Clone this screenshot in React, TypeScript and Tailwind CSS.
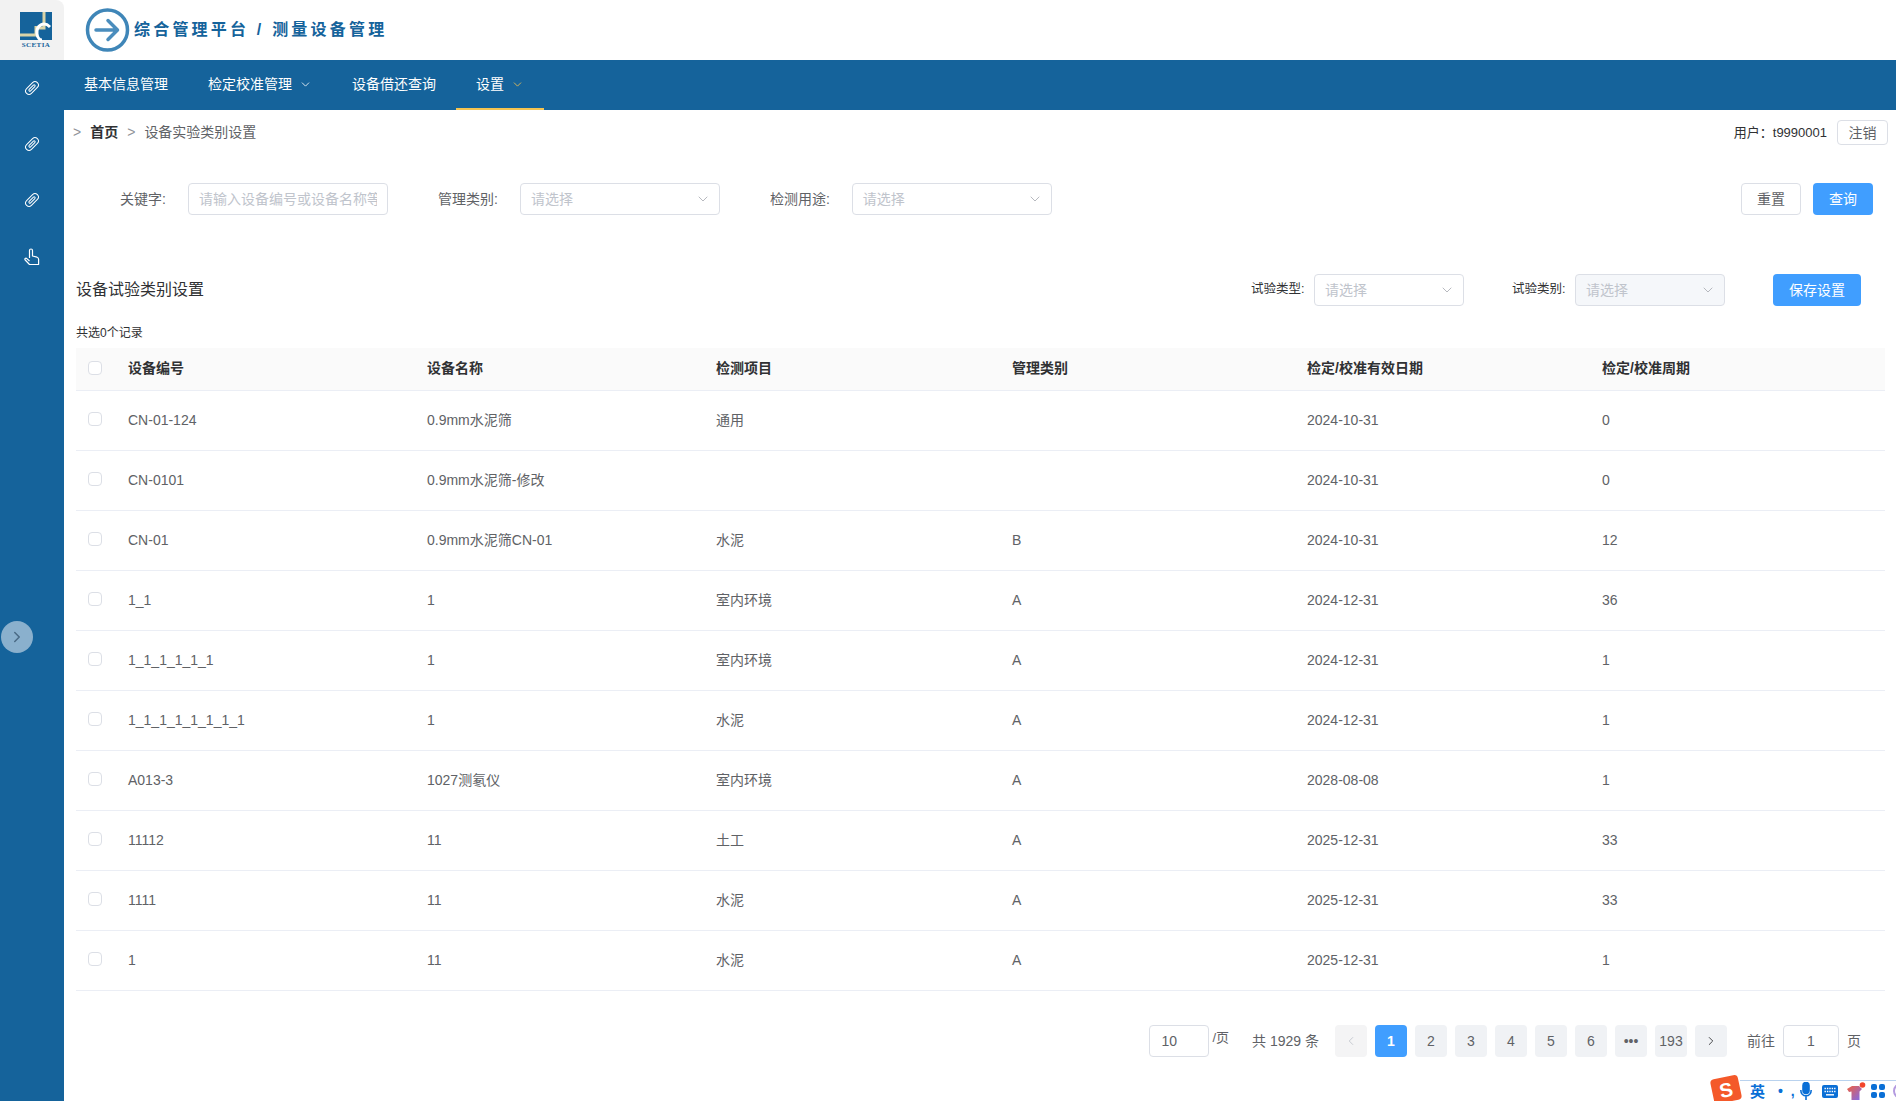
import { ChevronDown, ChevronLeft, ChevronRight } from "lucide-react";

const rows = [
  ["CN-01-124", "0.9mm水泥筛", "通用", "", "2024-10-31", "0"],
  ["CN-0101", "0.9mm水泥筛-修改", "", "", "2024-10-31", "0"],
  ["CN-01", "0.9mm水泥筛CN-01", "水泥", "B", "2024-10-31", "12"],
  ["1_1", "1", "室内环境", "A", "2024-12-31", "36"],
  ["1_1_1_1_1_1", "1", "室内环境", "A", "2024-12-31", "1"],
  ["1_1_1_1_1_1_1_1", "1", "水泥", "A", "2024-12-31", "1"],
  ["A013-3", "1027测氡仪", "室内环境", "A", "2028-08-08", "1"],
  ["11112", "11", "土工", "A", "2025-12-31", "33"],
  ["1111", "11", "水泥", "A", "2025-12-31", "33"],
  ["1", "11", "水泥", "A", "2025-12-31", "1"],
];

const headers = ["设备编号", "设备名称", "检测项目", "管理类别", "检定/校准有效日期", "检定/校准周期"];
const pages = ["2", "3", "4", "5", "6", "•••", "193"];

function Select({ width, disabled }: { width: string; disabled?: boolean }) {
  return (
    <div
      className={`flex h-8 items-center justify-between rounded border border-[#dcdfe6] pl-[10px] pr-2 text-sm text-[#c0c4cc] ${width} ${
        disabled ? "bg-[#f5f7fa]" : "bg-white"
      }`}
    >
      <span>请选择</span>
      <ChevronDown size={16} strokeWidth={1.25} className="text-[#a8abb2]" />
    </div>
  );
}

function Checkbox() {
  return <div className="h-[14px] w-[14px] rounded-sm border border-[#dcdfe6] bg-white" />;
}

function PageBtn({ children, active }: { children: React.ReactNode; active?: boolean }) {
  return (
    <div
      className={`flex h-8 w-8 items-center justify-center rounded-sm text-sm ${
        active ? "bg-[#409eff] font-bold text-white" : "bg-[#f0f2f5] text-[#606266]"
      }`}
    >
      {children}
    </div>
  );
}

function Logo() {
  return (
    <svg width="32" height="36" viewBox="0 0 32 36">
      <rect width="32" height="28" fill="#15639b" />
      <path d="M0 23H16V14M24 0V16H16" fill="none" stroke="#d9d3a8" strokeWidth="3" />
      <path d="M30 15C24 9 16 13 17 22C17.5 26 20 28 22 28" fill="none" stroke="#fff" strokeWidth="3" />
      <text x="16" y="35" textAnchor="middle" fontSize="7" fontWeight="700" fill="#15639b" fontFamily="Liberation Serif, serif" letterSpacing="0.4">
        SCETIA
      </text>
    </svg>
  );
}

function ArrowMark() {
  return (
    <svg width="45" height="44" viewBox="0 0 45 44" fill="none">
      <circle cx="22.5" cy="22" r="20" stroke="#3f86b8" strokeWidth="3.5" />
      <path d="M11 22H32M23 12.5L32.5 22L23 31.5" stroke="#4a8dbd" strokeWidth="3.5" strokeLinecap="round" strokeLinejoin="round" />
    </svg>
  );
}

function ClipLink() {
  return (
    <svg width="16" height="16" viewBox="0 0 16 16" fill="none" stroke="#fff" strokeWidth="1">
      <g transform="rotate(45 8 8)">
        <rect x="4.6" y="0.4" width="6.8" height="15.2" rx="3.4" />
        <rect x="7" y="4" width="2" height="8" rx="1" />
      </g>
    </svg>
  );
}

function HandUp() {
  return (
    <svg width="18" height="18" viewBox="0 0 18 18" fill="none" stroke="#fff" strokeWidth="1.2" strokeLinejoin="round">
      <path d="M6.5 10V2.5a1.5 1.5 0 0 1 3 0V8l4.5 1.2c1 .3 1.6 1 1.6 2V16.5H6.5L2.2 12c-.9-1 .5-2.4 1.6-1.4L6.5 13" />
    </svg>
  );
}

function ImeMic() {
  return (
    <svg width="12" height="19" viewBox="0 0 12 19" fill="none" stroke="#0a6fd6" strokeWidth="1.6">
      <rect x="3" y="0.5" width="6" height="11" rx="3" fill="#0a6fd6" />
      <path d="M0.8 8C0.8 11.5 3 13.8 6 13.8S11.2 11.5 11.2 8M6 14V18" />
    </svg>
  );
}

function ImeKeyboard() {
  return (
    <svg width="16" height="13" viewBox="0 0 16 13">
      <rect width="16" height="13" rx="2" fill="#0a6fd6" />
      <path d="M2.5 3.5H13.5M2.5 6.5H13.5" stroke="#fff" strokeWidth="1.4" strokeDasharray="1.4 1" />
      <path d="M4 9.8H12" stroke="#fff" strokeWidth="1.4" />
    </svg>
  );
}

function ImeShirt() {
  return (
    <svg width="19" height="18" viewBox="0 0 19 18">
      <defs>
        <linearGradient id="ime-shirt" x1="0" y1="0" x2="1" y2="1">
          <stop offset="0" stopColor="#f2603c" />
          <stop offset="1" stopColor="#7c6bf0" />
        </linearGradient>
      </defs>
      <path d="M0 7L5 4H12L15 7L12.5 9.5V18H4.5V9.5L2 10Z" fill="url(#ime-shirt)" />
      <circle cx="15.5" cy="3" r="2.8" fill="#f2452c" />
    </svg>
  );
}

function ImeGrid() {
  return (
    <svg width="14" height="14" viewBox="0 0 14 14" fill="#0a6fd6">
      <rect width="6" height="6" rx="2" />
      <rect x="8" width="6" height="6" rx="2" />
      <rect y="8" width="6" height="6" rx="2" />
      <rect x="8" y="8" width="6" height="6" rx="2" />
    </svg>
  );
}

export default function App() {
  return (
    <div className="relative flex h-screen flex-col overflow-hidden bg-white font-['Liberation_Sans','Noto_Sans_CJK_SC',sans-serif] text-sm text-[#606266]">
      <header className="flex h-[60px] shrink-0 items-center">
        <div className="flex h-full w-16 items-center justify-center rounded-tr-lg bg-[#f2f2f2] pl-2">
          <Logo />
        </div>
        <div className="ml-[21px]">
          <ArrowMark />
        </div>
        <div className="ml-1 text-base font-bold tracking-[3.2px] text-[#15639b]">综合管理平台 / 测量设备管理</div>
      </header>

      <div className="flex min-h-0 flex-1">
        <aside className="relative flex w-16 shrink-0 flex-col items-center gap-10 bg-[#15639b] pt-5 text-white">
          <ClipLink />
          <ClipLink />
          <ClipLink />
          <HandUp />
          <div className="absolute left-px top-[561px] flex h-8 w-8 items-center justify-center rounded-full bg-[#8ab0cd] text-[#4a6a85]">
            <ChevronRight size={18} strokeWidth={2} />
          </div>
        </aside>

        <main className="min-w-0 flex-1">
          <nav className="flex h-[50px] bg-[#15639b] text-sm text-white">
            <div className="flex items-center px-5 pb-[2px]">基本信息管理</div>
            <div className="flex items-center gap-[7px] px-5 pb-[2px]">
              检定校准管理
              <ChevronDown size={13} strokeWidth={1.5} />
            </div>
            <div className="flex items-center px-5 pb-[2px]">设备借还查询</div>
            <div className="flex items-center gap-[7px] border-b-2 border-[#f5c451] px-5">
              设置
              <ChevronDown size={13} strokeWidth={1.5} className="text-[#f5c451]" />
            </div>
          </nav>

          <div className="flex items-center justify-between pl-[9px] pr-2 pt-[9px]">
            <div className="flex items-center">
              <span className="text-[#909399]">&gt;</span>
              <span className="ml-[9px] font-bold text-[#303133]">首页</span>
              <span className="ml-[9px] text-[#909399]">&gt;</span>
              <span className="ml-[9px]">设备实验类别设置</span>
            </div>
            <div className="flex translate-y-px items-center gap-[10px]">
              <span className="pt-px text-[13px] text-[#303133]">用户：t9990001</span>
              <div className="flex h-[25px] w-[51px] items-center justify-center rounded border border-[#dcdfe6] text-sm">注销</div>
            </div>
          </div>

          <div className="mt-[39px] flex items-center pl-14 pr-[23px]">
            <span className="w-[48px]">关键字:</span>
            <input
              placeholder="请输入设备编号或设备名称等"
              className="ml-5 h-8 w-[200px] rounded border border-[#dcdfe6] px-[10px] text-sm outline-none placeholder:text-[#c0c4cc]"
            />
            <span className="ml-[50px]">管理类别:</span>
            <div className="ml-[22px]">
              <Select width="w-[200px]" />
            </div>
            <span className="ml-[50px]">检测用途:</span>
            <div className="ml-[22px]">
              <Select width="w-[200px]" />
            </div>
            <div className="ml-auto flex gap-3">
              <div className="flex h-8 w-[60px] items-center justify-center rounded border border-[#dcdfe6]">重置</div>
              <div className="flex h-8 w-[60px] items-center justify-center rounded bg-[#409eff] text-white">查询</div>
            </div>
          </div>

          <div className="mt-[59px] flex items-center pl-3 pr-[35px]">
            <h2 className="text-base font-normal text-[#303133]">设备试验类别设置</h2>
            <div className="ml-auto flex items-center">
              <span className="w-[53px] whitespace-nowrap text-[12.5px] text-[#303133]">试验类型:</span>
              <div className="ml-[10px]">
                <Select width="w-[150px]" />
              </div>
              <span className="ml-12 w-[53px] whitespace-nowrap text-[12.5px] text-[#303133]">试验类别:</span>
              <div className="ml-[10px]">
                <Select width="w-[150px]" disabled />
              </div>
              <div className="ml-12 flex h-8 w-[88px] items-center justify-center rounded bg-[#409eff] text-white">保存设置</div>
            </div>
          </div>

          <div className="mt-5 pl-3 text-xs leading-[14px] text-[#303133]">共选0个记录</div>

          <div className="mt-2 pl-3 pr-[11px]">
            <table className="w-full table-fixed border-collapse">
              <colgroup>
                <col className="w-[42px]" />
                <col className="w-[299px]" />
                <col className="w-[289px]" />
                <col className="w-[296px]" />
                <col className="w-[295px]" />
                <col className="w-[295px]" />
                <col />
              </colgroup>
              <thead>
                <tr className="h-[42px] border-b border-[#ebeef5] bg-[#fafafa]">
                  <th className="pb-[2px] pl-3">
                    <Checkbox />
                  </th>
                  {headers.map((h) => (
                    <th key={h} className="pb-[2px] pl-[10px] text-left text-sm font-bold text-[#303133]">
                      {h}
                    </th>
                  ))}
                  <th />
                </tr>
              </thead>
              <tbody>
                {rows.map((row, i) => (
                  <tr key={i} className="h-[60px] border-b border-[#ebeef5]">
                    <td className="pb-[2px] pl-3">
                      <Checkbox />
                    </td>
                    {row.map((cell, j) => (
                      <td key={j} className="pl-[10px] text-sm">
                        {cell}
                      </td>
                    ))}
                    <td />
                  </tr>
                ))}
              </tbody>
            </table>
          </div>

          <div className="mt-[34px] flex items-center justify-end pr-[35px] text-sm">
            <div className="flex h-8 w-[60px] items-center rounded border border-[#dcdfe6] pl-[11px]">10</div>
            <span className="ml-[3px] -mt-[4px] text-[13px]">/页</span>
            <span className="ml-[23px]">共 1929 条</span>
            <div className="ml-4 flex gap-2">
              <div className="flex h-8 w-8 items-center justify-center rounded-sm bg-[#f4f4f5] text-[#c0c4cc]">
                <ChevronLeft size={14} strokeWidth={1.5} />
              </div>
              <PageBtn active>1</PageBtn>
              {pages.map((p) => (
                <PageBtn key={p}>{p}</PageBtn>
              ))}
              <PageBtn>
                <ChevronRight size={14} strokeWidth={1.5} className="text-[#303133]" />
              </PageBtn>
            </div>
            <span className="ml-5">前往</span>
            <div className="ml-2 flex h-8 w-[56px] items-center justify-center rounded border border-[#dcdfe6]">1</div>
            <span className="ml-2">页</span>
          </div>
        </main>
      </div>

      {/* 输入法状态栏 */}
      <div className="absolute bottom-0 right-0 flex h-[21px] w-[156px] items-center overflow-hidden border-t border-[#b9d2ee] bg-white pl-[10px] text-[#0a6fd6]">
        <span className="w-[28px] shrink-0 text-[15px] font-bold leading-none">英</span>
        <span className="w-[22px] shrink-0 whitespace-pre text-sm font-bold leading-none">•  ,</span>
        <div className="flex shrink-0">
          <ImeMic />
        </div>
        <div className="ml-[10px] flex shrink-0">
          <ImeKeyboard />
        </div>
        <div className="ml-[9px] flex shrink-0">
          <ImeShirt />
        </div>
        <div className="ml-[5px] flex shrink-0">
          <ImeGrid />
        </div>
        <div className="ml-2 h-4 w-4 shrink-0 rounded-full border-2 border-[#b49be0]" />
      </div>
      <div className="absolute -bottom-px right-[156px] flex h-[25px] w-[28px] -rotate-12 items-center justify-center rounded bg-[#f4592a] text-xl font-bold leading-none text-white">
        S
      </div>
    </div>
  );
}
